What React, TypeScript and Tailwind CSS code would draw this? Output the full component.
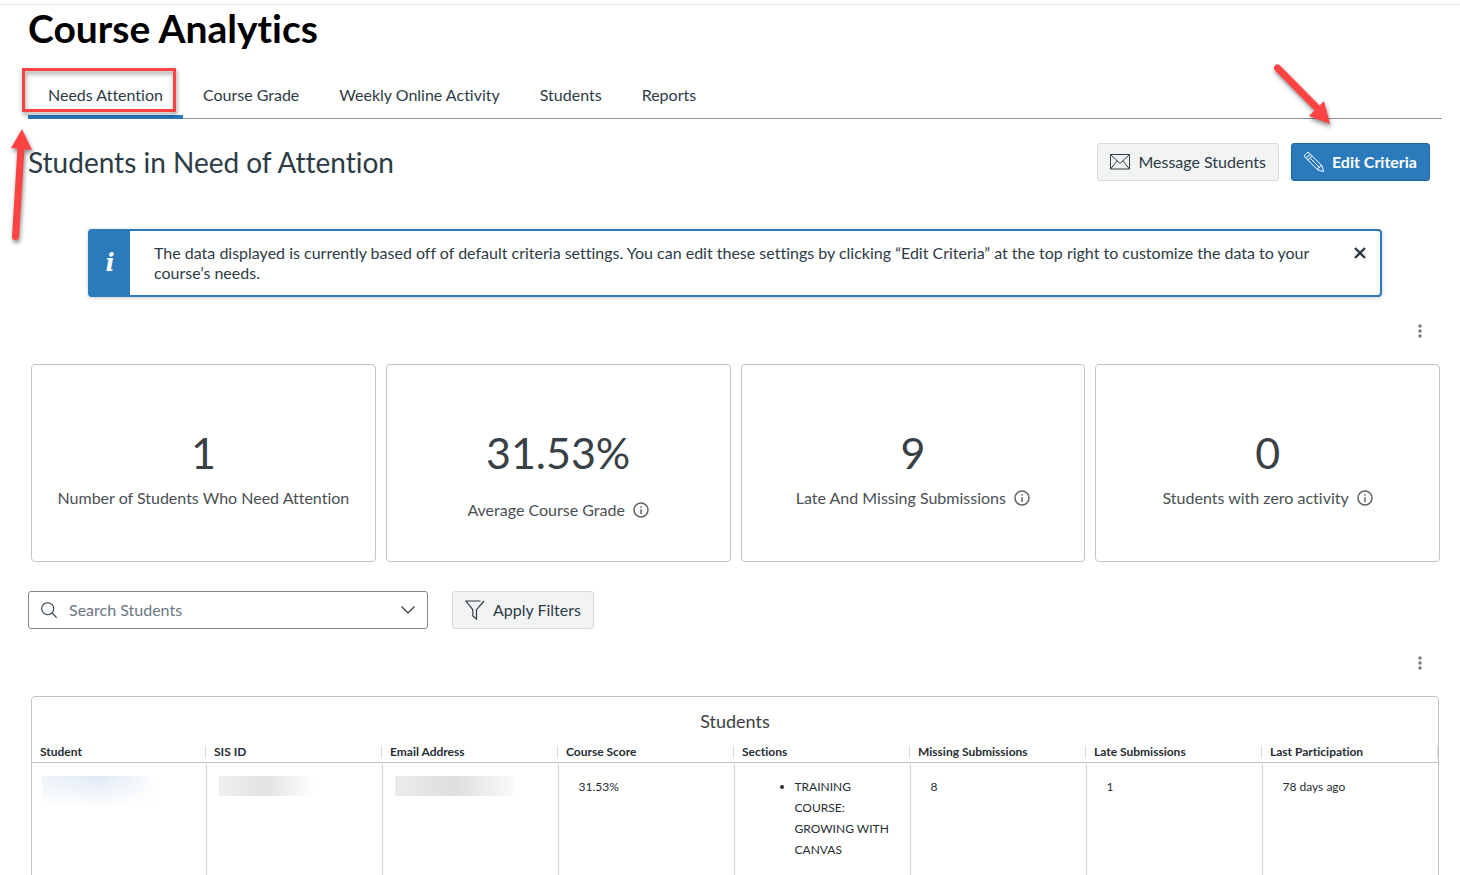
import React, { useState } from 'react';

const tabs = ['Needs Attention', 'Course Grade', 'Weekly Online Activity', 'Students', 'Reports'];

const stats = [
  { value: '1', label: 'Number of Students Who Need Attention', info: false, low: false },
  { value: '31.53%', label: 'Average Course Grade', info: true, low: true },
  { value: '9', label: 'Late And Missing Submissions', info: true, low: false },
  { value: '0', label: 'Students with zero activity', info: true, low: false },
];

const columns = [
  'Student',
  'SIS ID',
  'Email Address',
  'Course Score',
  'Sections',
  'Missing Submissions',
  'Late Submissions',
  'Last Participation',
];

function MailIcon() {
  return (
    <svg className="h-5 w-5" viewBox="0 0 20 20" fill="none" stroke="currentColor" aria-hidden="true">
      <path d="M.5 2.500h19v14.500H.5zM.5 2.500 10 11.500l9.500-9M.5 17l6.700-8.200M19.500 17l-6.700-8.200" />
    </svg>
  );
}

function PencilIcon() {
  return (
    <svg className="h-5 w-5" viewBox="0 0 20 20" fill="none" stroke="currentColor" strokeLinejoin="round" aria-hidden="true">
      <path d="M1 2.800 2.800 1Q4 0 5.200 1L18 13.800l1.500 5.700-5.700-1.500L1 5.200Q0 4 1 2.800z" />
      <path d="M2.500 6.700Q3 3.500 6.700 2.500M4.300 8.500Q5 5.300 8.500 4.300M6.700 6.700l8.800 8.800M13.800 18q-.3-2.500 1.700-2.500 0-2 2.500-1.700" />
    </svg>
  );
}

function FilterIcon() {
  return (
    <svg className="h-5 w-5" viewBox="0 0 20 20" fill="none" stroke="currentColor" strokeWidth="1.200" aria-hidden="true">
      <path d="M15.500 1H1l6.800 8.700V16l3.700 3V9.700L19 1" />
    </svg>
  );
}

function SearchIcon() {
  return (
    <svg className="h-4 w-4" viewBox="0 0 16 16" fill="none" stroke="currentColor" strokeWidth="1.100" aria-hidden="true">
      <circle cx="6.700" cy="6.700" r="6" />
      <path d="m11 11 4.700 4.700" />
    </svg>
  );
}

function InfoIcon() {
  return (
    <svg className="h-4 w-4" viewBox="0 0 16 16" fill="none" stroke="#5f6368" strokeWidth="1.500" aria-hidden="true">
      <circle cx="8" cy="8" r="7" />
      <path d="M8 7.200V12M8 4.300v1.500" />
    </svg>
  );
}

function KebabButton({ label }: { label: string }) {
  return (
    <button type="button" aria-label={label} className="flex h-6 w-6 items-center justify-center text-[#757b7d]">
      <svg className="h-4 w-4" viewBox="0 0 16 16" fill="currentColor" aria-hidden="true">
        <circle cx="8" cy="3" r="1.700" />
        <circle cx="8" cy="8" r="1.700" />
        <circle cx="8" cy="13" r="1.700" />
      </svg>
    </button>
  );
}

// Hand-placed callout arrows
function Arrow({ d, head, className }: { d: string; head: string; className: string }) {
  return (
    <svg
      className={`pointer-events-none absolute z-10 overflow-visible drop-shadow-[1px_3px_2px_rgba(0,0,0,0.45)] ${className}`}
      aria-hidden="true"
    >
      <path d={d} stroke="#ff4242" strokeWidth="7" strokeLinecap="round" fill="none" />
      <path d={head} fill="#ff4242" />
    </svg>
  );
}

export default function App() {
  const [activeTab, setActiveTab] = useState(0);
  const [showAlert, setShowAlert] = useState(true);
  const [search, setSearch] = useState('');

  return (
    <div className="relative h-screen overflow-hidden bg-white pt-1 font-['Lato',sans-serif] text-base text-[#2d3b45] [font-variant-ligatures:none]">
      <header className="border-t border-[#e8e8e8] pr-[18px] pl-7">
        <h1 className="pb-0.5 text-[39px] leading-[46px] font-bold text-black">Course Analytics</h1>
        <div role="tablist" className="relative mt-[18px] flex border-b border-[#8b969e]">
          {tabs.map((tab, i) => (
            <button
              key={tab}
              type="button"
              role="tab"
              aria-selected={i === activeTab}
              onClick={() => setActiveTab(i)}
              className={`-mb-px border-b-4 px-5 pt-3 pb-2 leading-6 ${i === activeTab ? 'border-[#2b7abc]' : 'border-transparent'}`}
            >
              {tab}
            </button>
          ))}
          <div className="pointer-events-none absolute -top-[3px] -left-1.5 h-11 w-[154px] border-3 border-[#ff4242] drop-shadow-[1px_3px_2px_rgba(0,0,0,0.4)]" />
        </div>
      </header>

      <main className="pr-[18px] pl-7">
        <div className="flex items-center justify-between pt-6 pr-3">
          <h2 className="text-[28px] leading-9">Students in Need of Attention</h2>
          <div className="flex gap-3">
            <button type="button" className="flex h-[38px] items-center gap-2 rounded-[3px] border border-[#d7dbde] bg-[#f2f4f4] px-3">
              <MailIcon />
              Message Students
            </button>
            <button type="button" className="flex h-[38px] items-center gap-2 rounded-[3px] border border-[#2366a0] bg-[#2b7abc] px-3 font-bold text-white">
              <PencilIcon />
              Edit Criteria
            </button>
          </div>
        </div>

        {showAlert && (
          <div role="alert" className="mx-15 mt-12 flex rounded-[4px] border-2 border-[#2b7abc] bg-white shadow-[0_1px_4px_rgba(0,0,0,0.2)]">
            <div className="flex w-10 shrink-0 items-center justify-center bg-[#2b7abc] font-['DejaVu_Serif',serif] text-[24px] leading-8 font-bold text-white italic">
              i
            </div>
            <p className="flex-1 py-3 pr-6 pl-6 leading-5">
              The data displayed is currently based off of default criteria settings. You can edit these settings by
              clicking “Edit Criteria” at the top right to customize the data to your course’s needs.
            </p>
            <button
              type="button"
              aria-label="Close"
              onClick={() => setShowAlert(false)}
              className="mt-3 mr-2.5 flex h-5 w-5 shrink-0 items-center justify-center"
            >
              <svg className="h-3 w-3" viewBox="0 0 12 12" stroke="currentColor" strokeWidth="2.400" aria-hidden="true">
                <path d="m1 1 10 10M11 1 1 11" />
              </svg>
            </button>
          </div>
        )}

        <div className="mt-[22px] flex justify-end pr-2.5">
          <KebabButton label="Summary options" />
        </div>

        <div className="mt-[21px] mr-0.5 ml-[3px] grid grid-cols-4 gap-2.5">
          {stats.map((s) => (
            <section
              key={s.label}
              className={`flex h-[198px] flex-col items-center rounded-[4px] border border-[#c0c5cb] pt-15 text-[#3c4043] ${s.low ? 'gap-[19px]' : 'gap-[7px]'}`}
            >
              <div className="text-[43px] leading-[56px] text-[#394147]">{s.value}</div>
              <div className="flex items-center gap-2 leading-5 text-[#4a4f54]">
                {s.label}
                {s.info && <InfoIcon />}
              </div>
            </section>
          ))}
        </div>

        <div className="mt-[29px] flex gap-6">
          <label className="flex h-[38px] w-[400px] items-center rounded-[3px] border border-[#7b8791] px-3">
            <SearchIcon />
            <input
              type="text"
              aria-label="Search Students"
              placeholder="Search Students"
              value={search}
              onChange={(e) => setSearch(e.target.value)}
              className="min-w-0 flex-1 px-3 outline-none placeholder:text-[#6b7780]"
            />
            <svg className="h-3.5 w-3.5" viewBox="0 0 14 14" fill="none" stroke="currentColor" strokeWidth="1.200" aria-hidden="true">
              <path d="m.5 3.500 6.500 6.500 6.500-6.500" />
            </svg>
          </label>
          <button type="button" className="flex h-[38px] items-center gap-2 rounded-[3px] border border-[#d7dbde] bg-[#f2f4f4] px-3">
            <FilterIcon />
            Apply Filters
          </button>
        </div>

        <div className="mt-[22px] flex justify-end pr-2.5">
          <KebabButton label="Table options" />
        </div>

        <section className="mt-[21px] mr-[3px] ml-[3px] rounded-[4px] border border-[#c0c5cb]">
          <h3 className="pt-3 text-center text-lg leading-6 text-[#3c4043]">Students</h3>
          <table className="mt-2 w-full table-fixed text-left text-xs text-[#262d33]">
            <thead>
              <tr className="border-b border-[#c0c2c8]">
                {columns.map((c) => (
                  <th key={c} className="p-0 pt-[5px] pb-1 align-bottom font-bold first:w-[174px]">
                    <div className="border-r border-[#d9dbde] pl-2 leading-3 whitespace-nowrap">{c}</div>
                  </th>
                ))}
              </tr>
            </thead>
            <tbody>
              <tr className="align-top leading-[21px] *:border-r *:border-[#d5d7db] *:pt-[13px] *:last:border-r-0">
                <td className="px-2.5 pb-20">
                  <div className="h-10 w-30 bg-linear-to-r from-[#eef3f9] via-[#dfe9f5] to-white">
                    <div className="h-full bg-linear-to-b from-white/0 to-white to-80%" />
                  </div>
                </td>
                <td className="px-3">
                  <div className="h-5 w-24 bg-linear-to-r from-[#f0f0f0] via-[#e1e2e2] to-white" />
                </td>
                <td className="px-3">
                  <div className="h-5 w-[118px] bg-linear-to-r from-[#ececec] via-[#dddee0] to-[#fafafa]" />
                </td>
                <td className="px-5">31.53%</td>
                <td className="pr-5 pl-15">
                  <ul className="list-disc">
                    <li>TRAINING COURSE: GROWING WITH CANVAS</li>
                  </ul>
                </td>
                <td className="px-5">8</td>
                <td className="px-5">1</td>
                <td className="px-5">78 days ago</td>
              </tr>
            </tbody>
          </table>
        </section>
      </main>

      <Arrow className="top-[129px] left-2.5 h-28 w-5" d="M5.500 107.500 11 19" head="M12 0 22 21 1 19z" />
      <Arrow className="top-16 right-[129px] h-15 w-14" d="M2.500 4 44 46" head="M55 60 49 37 34 52z" />
    </div>
  );
}
